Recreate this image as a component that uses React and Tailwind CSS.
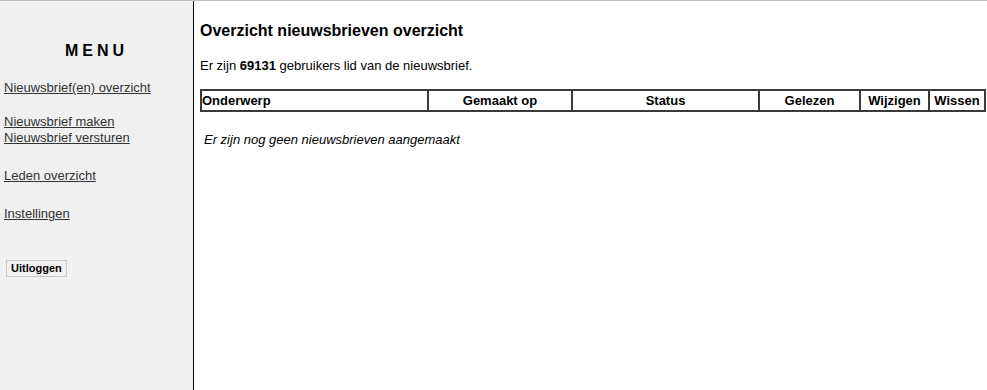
export default function App() {
  const cols = [
    { label: "Onderwerp", w: "w-[227px]", align: "text-left" },
    { label: "Gemaakt op", w: "w-[144px]", align: "text-center" },
    { label: "Status", w: "w-[187px]", align: "text-center" },
    { label: "Gelezen", w: "w-[101px]", align: "text-center" },
    { label: "Wijzigen", w: "w-[69px]", align: "text-center" },
    { label: "Wissen", w: "w-[56px]", align: "text-center" },
  ];

  return (
    <div className="flex min-h-[390px] flex-col bg-white font-['Liberation_Sans',Arial,sans-serif] text-[13px] text-black">
      <div className="h-px bg-[#c0c0c0]" />
      <div className="flex flex-1">
        <aside className="w-[194px] shrink-0 border-r border-black bg-[#f0f0f0] pl-1">
          <h2 className="mt-[38px] pr-1 text-center text-[16px] font-bold tracking-[4px] text-black">
            MENU
          </h2>
          <nav className="mt-[17px] flex flex-col text-[#333]">
            <a href="#" className="underline leading-[16px]">Nieuwsbrief(en) overzicht</a>
            <a href="#" className="mt-[18px] underline leading-[16px]">Nieuwsbrief maken</a>
            <a href="#" className="underline leading-[16px]">Nieuwsbrief versturen</a>
            <a href="#" className="mt-[22px] underline leading-[16px]">Leden overzicht</a>
            <a href="#" className="mt-[22px] underline leading-[16px]">Instellingen</a>
          </nav>
          <button className="ml-[2px] mt-[38px] border border-[#c8c8c8] bg-[#f0f0f0] px-1 py-px text-[11px] font-bold leading-[13px]">
            Uitloggen
          </button>
        </aside>
        <main className="flex-1 pl-[6px] pr-[2px]">
          <h1 className="mt-[21px] text-[16px] font-bold leading-[18px]">
            Overzicht nieuwsbrieven overzicht
          </h1>
          <p className="mt-[18px] leading-[15px]">
            Er zijn <b>69131</b> gebruikers lid van de nieuwsbrief.
          </p>
          <table className="mt-[16px] w-[786px] border-collapse border-2 border-[#3a3a3a]">
            <thead>
              <tr>
                {cols.map((c) => (
                  <th
                    key={c.label}
                    className={`${c.w} ${c.align} border-2 border-[#3a3a3a] px-0 py-[2px] font-bold leading-[15px]`}
                  >
                    {c.label}
                  </th>
                ))}
              </tr>
            </thead>
          </table>
          <p className="mt-[20px] pl-1 italic leading-[15px]">
            Er zijn nog geen nieuwsbrieven aangemaakt
          </p>
        </main>
      </div>
    </div>
  );
}
